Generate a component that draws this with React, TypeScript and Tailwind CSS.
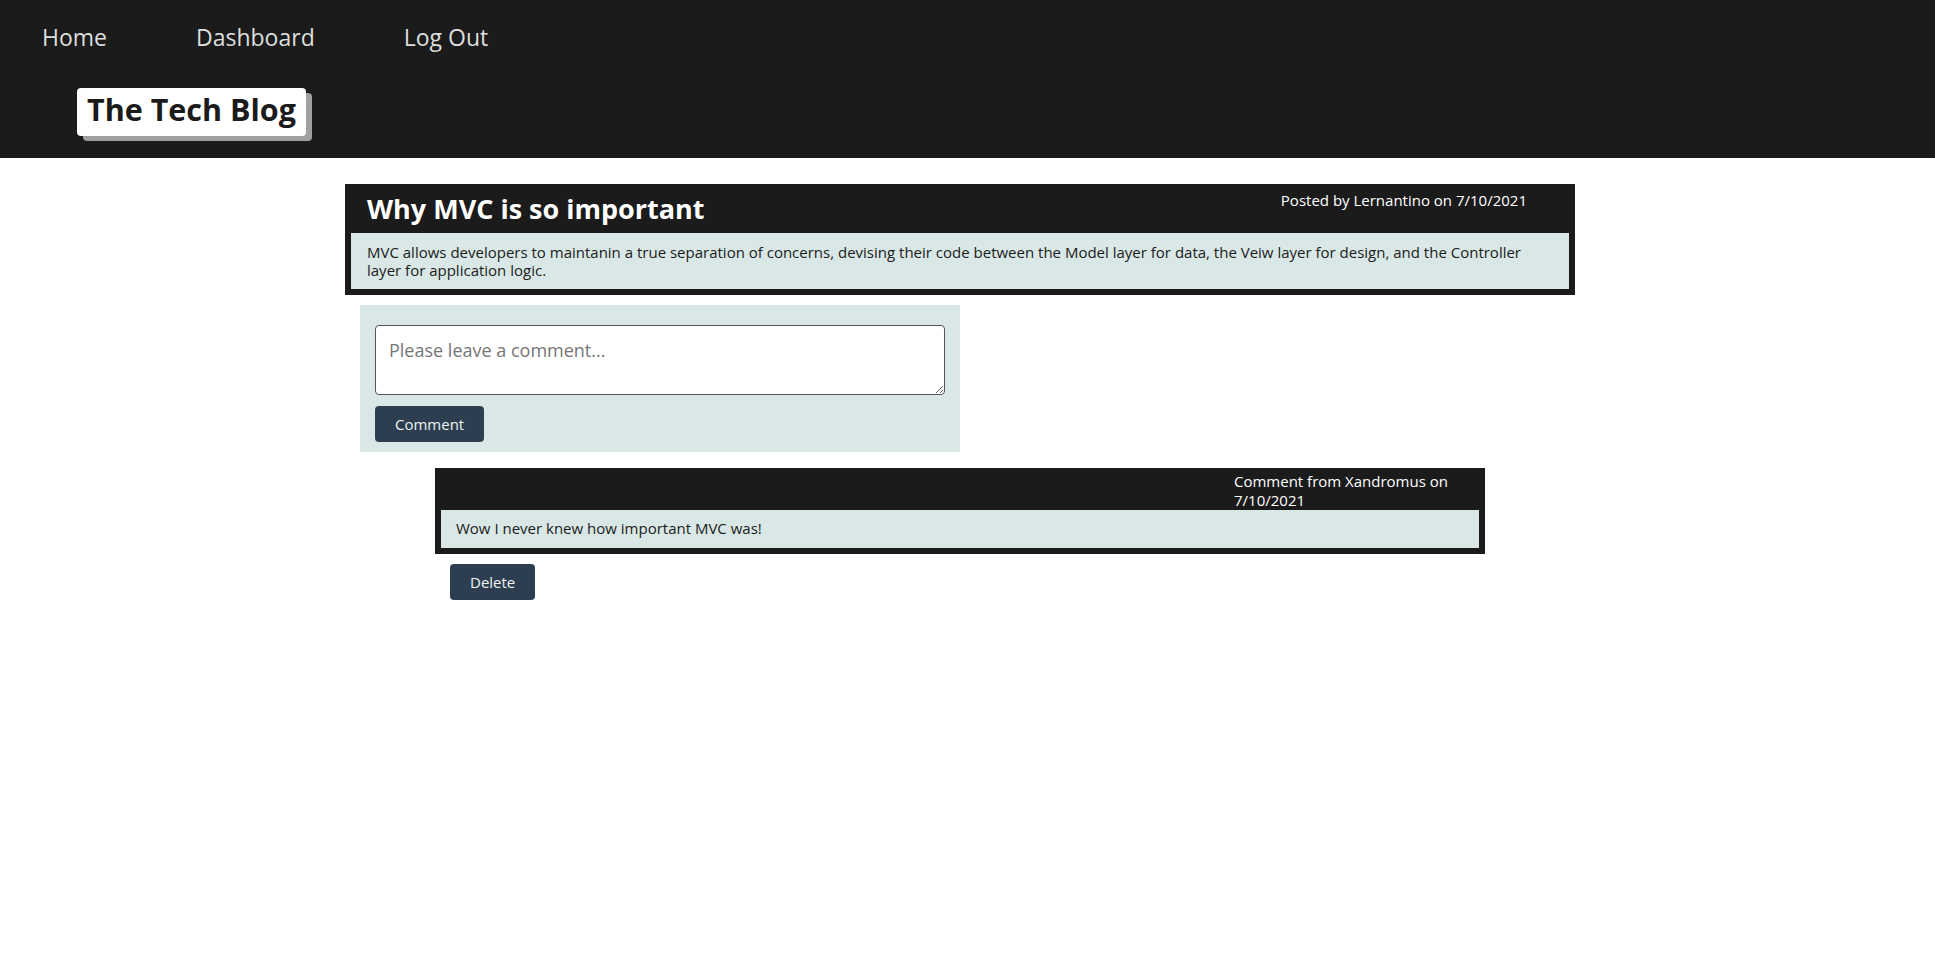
export default function App() {
  return (
    <div className="min-h-[969px] bg-white font-['Open_Sans',sans-serif]">
      <header className="h-[158px] bg-[#1b1b1b]">
        <nav className="flex gap-[89px] pl-[42px] pt-[20px] text-[23px] leading-[34px] text-[#dedede]">
          <a href="#">Home</a>
          <a href="#">Dashboard</a>
          <a href="#">Log Out</a>
        </nav>
        <div className="ml-[77px] mt-[34px] inline-block h-[48px] rounded-[4px] bg-white px-[10px] text-[30.5px] font-bold leading-[43px] text-[#1b1b1b] shadow-[6px_5px_0_#a0a0a0]">
          The Tech Blog
        </div>
      </header>
      <main className="pl-[345px] pt-[26px]">
        <section className="w-[1230px] bg-[#1b1b1b] px-[6px] pb-[6px] pt-[6px]">
          <div className="flex h-[43px] items-start justify-between">
            <h2 className="ml-[16px] mt-[1px] text-[27px] font-bold leading-[36px] text-white">
              Why MVC is so important
            </h2>
            <p className="mr-[42px] text-[15px] leading-[20px] text-white">Posted by Lernantino on 7/10/2021</p>
          </div>
          <div className="bg-[#d9e8e6] px-[16px] pb-[10px] pt-[10px] text-[15px] leading-[18px] text-[#1b1b1b]">
            MVC allows developers to maintanin a true separation of concerns, devising their code between the Model layer for data, the Veiw layer for design, and the Controller layer for application logic.
          </div>
        </section>
        <form className="ml-[15px] mt-[10px] w-[600px] bg-[#d9e8e6] px-[15px] pb-[10px] pt-[20px]">
          <textarea
            className="block h-[70px] w-full rounded-[4px] border border-[#555] bg-white px-[13px] pb-[8px] pt-[12px] text-[18px] leading-[24px] text-[#1b1b1b] placeholder:text-[#767676]"
            placeholder="Please leave a comment..."
          />
          <button type="button" className="mt-[11px] h-[36px] rounded-[4px] bg-[#2c3e50] px-[20px] text-[15px] text-[#eef4f3]">
            Comment
          </button>
        </form>
        <section className="ml-[90px] mt-[16px] w-[1050px] bg-[#1b1b1b] px-[6px] pb-[6px] pt-[4px]">
          <div className="flex h-[38px] justify-end">
            <p className="w-[245px] text-[15px] leading-[19px] text-white">Comment from Xandromus on 7/10/2021</p>
          </div>
          <div className="flex h-[38px] items-center bg-[#d9e8e6] px-[15px] pb-[1px] text-[15px] text-[#1b1b1b]">
            Wow I never knew how important MVC was!
          </div>
        </section>
        <button type="button" className="ml-[105px] mt-[10px] h-[36px] rounded-[4px] bg-[#2c3e50] px-[20px] text-[15px] text-[#eef4f3]">
          Delete
        </button>
      </main>
    </div>
  );
}
